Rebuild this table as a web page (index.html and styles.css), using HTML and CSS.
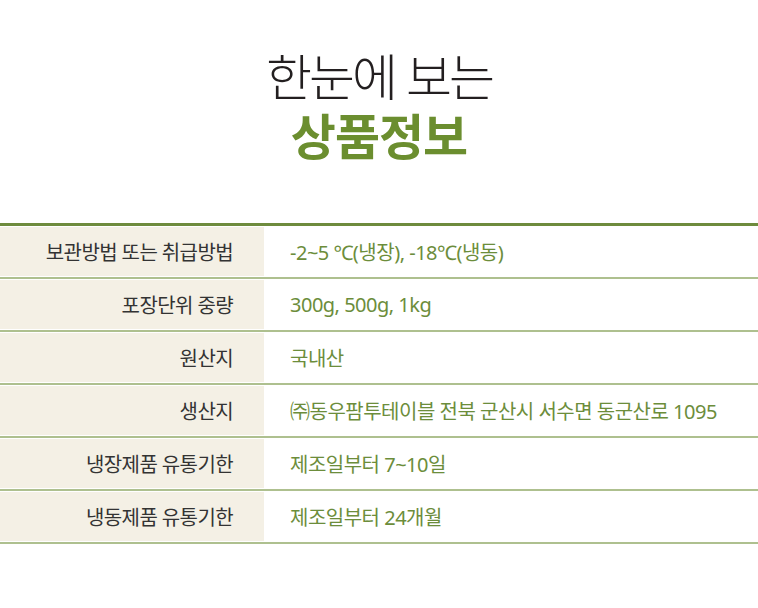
FILE: index.html
```html
<!DOCTYPE html>
<html lang="ko">
<head>
<meta charset="utf-8">
<link rel="stylesheet" href="styles.css">
</head>
<body>
<div class="page">
  <header class="title">
    <div class="title-top">한눈에 보는</div>
    <div class="title-main">상품정보</div>
  </header>
  <div class="info">
    <div class="row"><div class="label">보관방법 또는 취급방법</div><div class="value">-2~5 ℃(냉장), -18℃(냉동)</div></div>
    <div class="row"><div class="label">포장단위 중량</div><div class="value">300g, 500g, 1kg</div></div>
    <div class="row"><div class="label">원산지</div><div class="value">국내산</div></div>
    <div class="row"><div class="label">생산지</div><div class="value">㈜동우팜투테이블 전북 군산시 서수면 동군산로 1095</div></div>
    <div class="row"><div class="label">냉장제품 유통기한</div><div class="value">제조일부터 7~10일</div></div>
    <div class="row"><div class="label">냉동제품 유통기한</div><div class="value">제조일부터 24개월</div></div>
  </div>
</div>
</body>
</html>
```

FILE: styles.css
```css
html, body {
  margin: 0;
  padding: 0;
  background: #ffffff;
}
body {
  font-family: "Noto Sans CJK KR", sans-serif;
}
.page {
  width: 758px;
  padding-top: 44px;
}
.title {
  text-align: center;
  margin-bottom: 59px;
}
.title-top {
  font-size: 50px;
  font-weight: 300;
  color: #231f20;
  letter-spacing: -3px;
  line-height: 60px;
}
.title-main {
  font-size: 49px;
  font-weight: 700;
  color: #6b8e2f;
  letter-spacing: -1px;
  line-height: 60px;
}
.info {
  border-top: 3px solid #6e8b3d;
}
.row {
  display: flex;
  padding: 1px 0;
  border-bottom: 2px solid #aec08f;
}
.label {
  width: 264px;
  height: 49px;
  box-sizing: border-box;
  padding-right: 31px;
  background: #f4f0e5;
  display: flex;
  align-items: center;
  justify-content: flex-end;
  font-family: "Noto Sans", "Noto Sans CJK KR", sans-serif;
  font-size: 20px;
  font-weight: 400;
  color: #333333;
  letter-spacing: -0.6px;
}
.value {
  flex: 1;
  display: flex;
  align-items: center;
  padding-left: 26px;
  font-family: "Noto Sans", "Noto Sans CJK KR", sans-serif;
  font-size: 20px;
  font-weight: 400;
  color: #6c8d3b;
  letter-spacing: -0.5px;
}
```
